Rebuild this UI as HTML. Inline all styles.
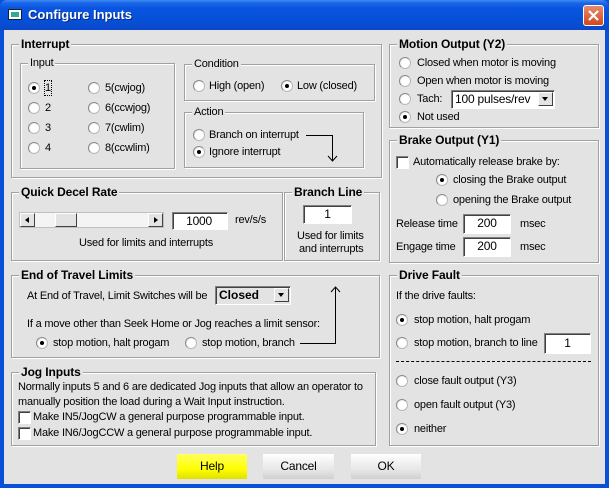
<!DOCTYPE html>
<html><head><meta charset="utf-8"><style>
*{box-sizing:border-box;margin:0;padding:0}
body{width:609px;height:488px;overflow:hidden;background:#0a4fd8;font-family:"Liberation Sans",sans-serif;font-size:11px;letter-spacing:-0.2px;color:#000;position:relative}
#title{position:absolute;left:0;top:0;width:609px;height:30px;background:linear-gradient(#3f8cf3 0,#1a66e8 3px,#0a55e0 8px,#0650d8 20px,#0a48c8 30px);border-radius:7px 7px 0 0}
#title .t{position:absolute;left:28px;top:7px;color:#fff;font-weight:bold;font-size:13px;letter-spacing:0;text-shadow:1px 1px #0a2a80}
#client{position:absolute;left:4px;top:30px;width:601px;height:454px;background:#e3e3e3}
.a{position:absolute;white-space:nowrap;line-height:14px}
.g{position:absolute;border:1px solid #a0a0a0;box-shadow:inset 1px 1px 0 #fff,1px 1px 0 #fff}
.g>.l{position:absolute;top:-8px;left:7px;background:#e3e3e3;padding:0 2px;line-height:14px;white-space:nowrap}
.b{font-weight:bold;font-size:12px;letter-spacing:-0.1px}
.r{position:absolute;width:12px;height:12px;border-radius:50%;background:radial-gradient(circle at 60% 60%,#fff 50%,#ddd 100%);border:1px solid #b8b8b8;border-top-color:#888;border-left-color:#888}
.r.on::after{content:"";position:absolute;left:3px;top:3px;width:4px;height:4px;border-radius:50%;background:#000}
.c{position:absolute;width:13px;height:13px;background:#fff;border:1px solid #fff;border-top-color:#808080;border-left-color:#808080;box-shadow:inset 1px 1px 0 #404040}
.e{position:absolute;background:#fff;border:1px solid #fff;border-top-color:#808080;border-left-color:#808080;box-shadow:inset 1px 1px 0 #404040;line-height:16px;font-size:12px}
.btn{position:absolute;height:25px;line-height:24px;text-align:center;font-size:12px;background:linear-gradient(#fff,#e8e8e8 60%,#d0d0d0)}
.dd{position:absolute;width:15px;height:14px;background:#e3e3e3;border:1px solid #fff;border-right-color:#404040;border-bottom-color:#404040}
.dd::after{content:"";position:absolute;left:3px;top:4px;border:3.5px solid transparent;border-top:4px solid #000}
</style></head><body>
<div id="title">
<div style="position:absolute;left:8px;top:9px;width:14px;height:11px;background:#fff;border:1px solid #123"><div style="margin:2px;height:5px;background:#3a9"></div></div>
<div class="t">Configure Inputs</div>
<div style="position:absolute;left:583px;top:5px;width:21px;height:21px;border:1px solid #fff;border-radius:3px;background:linear-gradient(#e88a70,#d2461c)"><svg width="19" height="19" style="position:absolute;left:0;top:0"><path d="M5 5L14 14M14 5L5 14" stroke="#fff" stroke-width="2.2"/></svg></div>
</div>
<div id="client"></div>
<div style="position:absolute;left:0;top:0">
<div class="g" style="left:11px;top:44px;width:371px;height:134px"><span class="l b">Interrupt</span></div>
<div class="g" style="left:20px;top:63px;width:155px;height:106px"><span class="l">Input</span></div>
<div class="r on" style="left:28px;top:82px"></div><span class="a" style="left:45px;top:81px;outline:1px dotted #000">1</span>
<div class="r" style="left:28px;top:102px"></div><span class="a" style="left:45px;top:101px">2</span>
<div class="r" style="left:28px;top:122px"></div><span class="a" style="left:45px;top:121px">3</span>
<div class="r" style="left:28px;top:142px"></div><span class="a" style="left:45px;top:141px">4</span>
<div class="r" style="left:88px;top:82px"></div><span class="a" style="left:105px;top:81px">5(cwjog)</span>
<div class="r" style="left:88px;top:102px"></div><span class="a" style="left:105px;top:101px">6(ccwjog)</span>
<div class="r" style="left:88px;top:122px"></div><span class="a" style="left:105px;top:121px">7(cwlim)</span>
<div class="r" style="left:88px;top:142px"></div><span class="a" style="left:105px;top:141px">8(ccwlim)</span>
<div class="g" style="left:184px;top:64px;width:191px;height:37px"><span class="l">Condition</span></div>
<div class="r" style="left:193px;top:80px"></div><span class="a" style="left:209px;top:79px">High (open)</span>
<div class="r on" style="left:281px;top:80px"></div><span class="a" style="left:297px;top:79px">Low (closed)</span>
<div class="g" style="left:184px;top:112px;width:180px;height:56px"><span class="l">Action</span></div>
<div class="r" style="left:193px;top:129px"></div><span class="a" style="left:209px;top:128px">Branch on interrupt</span>
<div class="r on" style="left:193px;top:146px"></div><span class="a" style="left:209px;top:145px">Ignore interrupt</span>
<svg class="a" style="left:300px;top:128px" width="40" height="36"><path d="M6 7.5H32.5V33M28 28L32.5 33L37 28" stroke="#000" fill="none"/></svg>
<div class="g" style="left:11px;top:192px;width:272px;height:69px"><span class="l b">Quick Decel Rate</span></div>
<div class="a" style="left:19px;top:212px;width:145px;height:16px;background:#f4f4f4;border:1px solid #c0c0c0"></div>
<div class="a" style="left:20px;top:213px;width:15px;height:14px;background:#e3e3e3;border:1px solid #fff;border-right-color:#404040;border-bottom-color:#404040"><div style="position:absolute;left:4px;top:3px;border:3.5px solid transparent;border-right:4px solid #000;border-left:0"></div></div>
<div class="a" style="left:148px;top:213px;width:15px;height:14px;background:#e3e3e3;border:1px solid #fff;border-right-color:#404040;border-bottom-color:#404040"><div style="position:absolute;left:5px;top:3px;border:3.5px solid transparent;border-left:4px solid #000;border-right:0"></div></div>
<div class="a" style="left:55px;top:213px;width:22px;height:14px;background:#e3e3e3;border:1px solid #fff;border-right-color:#404040;border-bottom-color:#404040"></div>
<div class="e" style="left:172px;top:212px;width:56px;height:18px;text-align:right;padding-right:15px">1000</div>
<span class="a" style="left:235px;top:213px">rev/s/s</span>
<span class="a" style="left:79px;top:236px">Used for limits and interrupts</span>
<div class="g" style="left:284px;top:192px;width:96px;height:69px"><span class="l b">Branch Line</span></div>
<div class="e" style="left:303px;top:205px;width:49px;height:19px;text-align:center">1</div>
<span class="a" style="left:297px;top:229px">Used for limits</span>
<span class="a" style="left:299px;top:242px">and interrupts</span>
<div class="g" style="left:11px;top:275px;width:369px;height:83px"><span class="l b">End of Travel Limits</span></div>
<span class="a" style="left:27px;top:289px">At End of Travel, Limit Switches will be</span>
<div class="e" style="left:215px;top:286px;width:76px;height:19px;font-weight:bold;padding-left:3px;background:#e3e3e3;letter-spacing:0">Closed</div>
<div class="dd" style="left:274px;top:288px"></div>
<span class="a" style="left:27px;top:317px">If a move other than Seek Home or Jog reaches a limit sensor:</span>
<div class="r on" style="left:36px;top:337px"></div><span class="a" style="left:53px;top:336px">stop motion, halt progam</span>
<div class="r" style="left:185px;top:337px"></div><span class="a" style="left:202px;top:336px">stop motion, branch</span>
<svg class="a" style="left:295px;top:283px" width="50" height="64"><path d="M5 60.5H40.5V4M36 9L40.5 4L45 9" stroke="#000" fill="none"/></svg>
<div class="g" style="left:11px;top:372px;width:365px;height:74px"><span class="l b">Jog Inputs</span></div>
<span class="a" style="left:18px;top:380px">Normally inputs 5 and 6 are dedicated Jog inputs that allow an operator to</span>
<span class="a" style="left:18px;top:395px">manually position the load during a Wait Input instruction.</span>
<div class="c" style="left:18px;top:411px"></div><span class="a" style="left:33px;top:410px">Make IN5/JogCW a general purpose programmable input.</span>
<div class="c" style="left:18px;top:427px"></div><span class="a" style="left:33px;top:426px">Make IN6/JogCCW a general purpose programmable input.</span>
<div class="g" style="left:389px;top:44px;width:210px;height:84px"><span class="l b">Motion Output (Y2)</span></div>
<div class="r" style="left:399px;top:57px"></div><span class="a" style="left:417px;top:56px">Closed when motor is moving</span>
<div class="r" style="left:399px;top:75px"></div><span class="a" style="left:417px;top:74px">Open when motor is moving</span>
<div class="r" style="left:399px;top:93px"></div><span class="a" style="left:417px;top:92px">Tach:</span>
<div class="e" style="left:451px;top:90px;width:104px;height:19px;padding-left:3px">100 pulses/rev</div>
<div class="dd" style="left:538px;top:92px"></div>
<div class="r on" style="left:399px;top:111px"></div><span class="a" style="left:417px;top:110px">Not used</span>
<div class="g" style="left:389px;top:140px;width:210px;height:123px"><span class="l b">Brake Output (Y1)</span></div>
<div class="c" style="left:396px;top:156px"></div><span class="a" style="left:413px;top:155px">Automatically release brake by:</span>
<div class="r on" style="left:436px;top:174px"></div><span class="a" style="left:453px;top:173px">closing the Brake output</span>
<div class="r" style="left:436px;top:194px"></div><span class="a" style="left:453px;top:193px">opening the Brake output</span>
<span class="a" style="left:396px;top:217px">Release time</span>
<div class="e" style="left:463px;top:214px;width:48px;height:20px;text-align:center">200</div>
<span class="a" style="left:520px;top:217px">msec</span>
<span class="a" style="left:396px;top:240px">Engage time</span>
<div class="e" style="left:463px;top:237px;width:48px;height:20px;text-align:center">200</div>
<span class="a" style="left:520px;top:240px">msec</span>
<div class="g" style="left:389px;top:275px;width:210px;height:171px"><span class="l b">Drive Fault</span></div>
<span class="a" style="left:396px;top:289px">If the drive faults:</span>
<div class="r on" style="left:396px;top:314px"></div><span class="a" style="left:414px;top:313px">stop motion, halt progam</span>
<div class="r" style="left:396px;top:337px"></div><span class="a" style="left:414px;top:336px">stop motion, branch to line</span>
<div class="e" style="left:544px;top:333px;width:47px;height:21px;text-align:center;line-height:18px">1</div>
<div class="a" style="left:396px;top:361px;width:195px;border-top:1px dashed #000"></div>
<div class="r" style="left:396px;top:375px"></div><span class="a" style="left:414px;top:374px">close fault output (Y3)</span>
<div class="r" style="left:396px;top:399px"></div><span class="a" style="left:414px;top:398px">open fault output (Y3)</span>
<div class="r on" style="left:396px;top:423px"></div><span class="a" style="left:414px;top:422px">neither</span>
<div class="btn" style="left:177px;top:454px;width:70px;background:linear-gradient(#ffff60,#ffff00 60%,#e0e000)">Help</div>
<div class="btn" style="left:263px;top:454px;width:71px">Cancel</div>
<div class="btn" style="left:351px;top:454px;width:70px">OK</div>
</div>
</body></html>
